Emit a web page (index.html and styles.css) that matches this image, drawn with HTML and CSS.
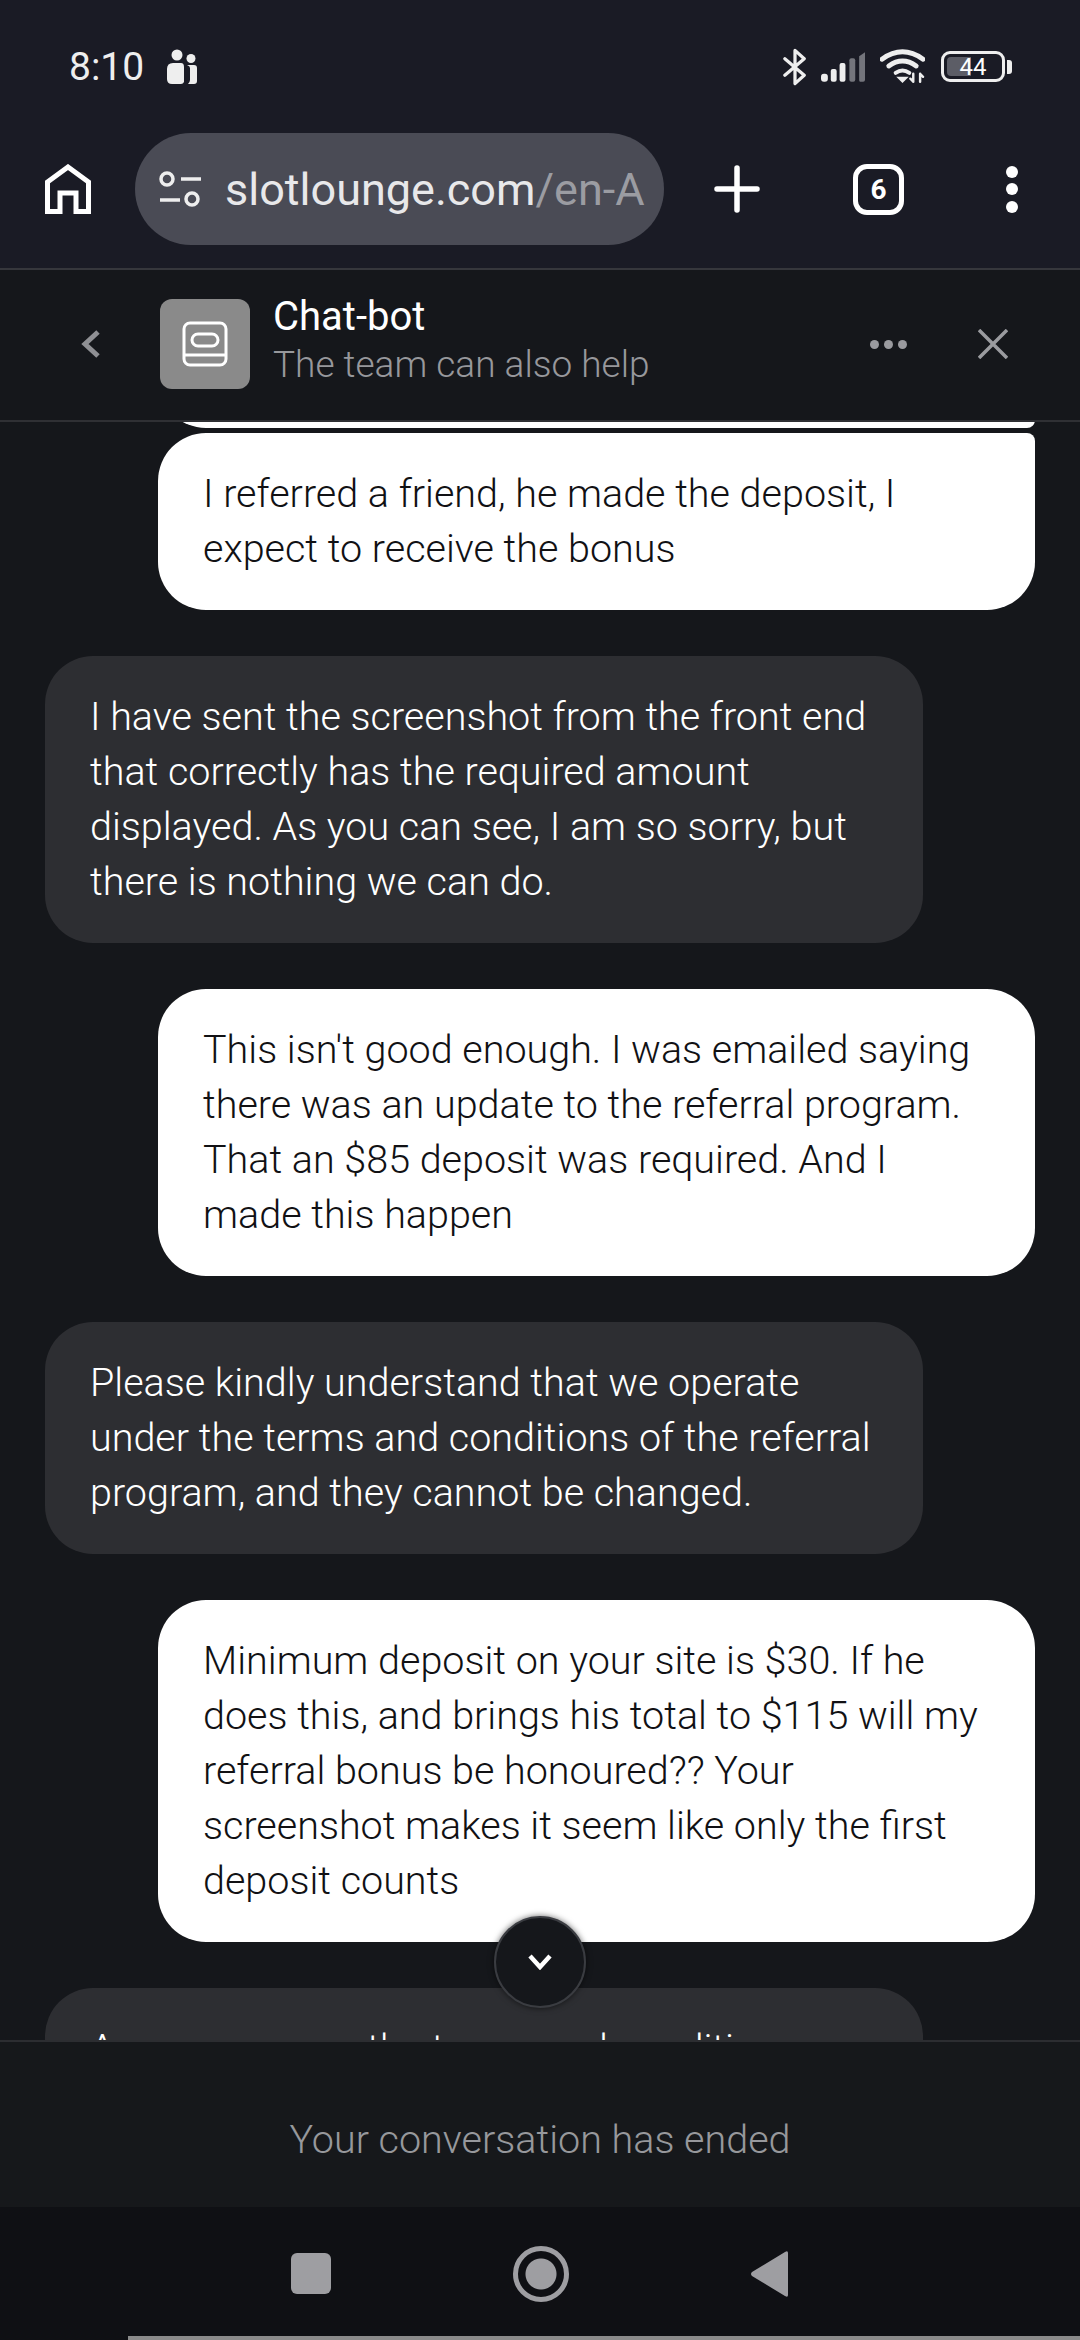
FILE: index.html
```html
<!DOCTYPE html>
<html>
  <head>
    <title>chat</title>
    <link rel="stylesheet" href="styles.css">
  </head>
  <body>
    <div id="phone">
      <div id="top-bar">
        <div id="status-bar">
          <div class="status-left">
            <span id="clock">8:10</span>
            <svg class="people" width="32" height="36" viewBox="0 0 32 36">
              <circle cx="11" cy="6" r="5.500" fill="#eeeeee"/>
              <circle cx="25" cy="9.500" r="4.500" fill="#eeeeee"/>
              <path d="M1 20q0-6 6-6h8q3 0 3 4v15q-1 2-3 2H6q-5 0-5-5z" fill="#eeeeee"/>
              <path d="M21 16h7q3 0 3 3v13q0 3-3 3h-6q2-2 2-4V19q0-2-3-3z" fill="#eeeeee"/>
            </svg>
          </div>
          <div class="status-right">
            <svg width="24" height="40" viewBox="0 0 26 40" fill="none" stroke="#eeeeee" stroke-width="3.500" stroke-linejoin="round" stroke-linecap="round">
              <path d="M2 11l21 18-10 9V2l10 9L2 29"/>
            </svg>
            <svg class="signal" width="45" height="30" viewBox="0 0 46 30">
              <rect x="0" y="22" width="7" height="8" rx="3" fill="#eeeeee"/>
              <rect x="10" y="17" width="6" height="13" rx="2" fill="#eeeeee"/>
              <rect x="19" y="11" width="6" height="19" rx="2" fill="#eeeeee"/>
              <rect x="29" y="6" width="6" height="24" rx="2" fill="#74757c"/>
              <path d="M39 4l6-4v28q0 2-2 2h-3q-1 0-1-2z" fill="#74757c"/>
            </svg>
            <svg class="wifi" width="45" height="35" viewBox="0 0 46 35" fill="none" stroke="#eeeeee" stroke-linecap="round">
              <path d="M2 10Q23-5 44 10" stroke-width="5"/>
              <path d="M9 17q14-10 28 0" stroke-width="5"/>
              <path d="M16 24q7-5 14 0" stroke-width="4"/>
              <path d="M19 29h8l-4 4z" fill="#eeeeee" stroke-width="2"/>
              <path d="M34 25v8M31 30l3 3M41 33v-8M41 25l3 3" stroke-width="2.500"/>
            </svg>
            <div class="battery">
              <div class="battery-box">
                <div class="battery-fill"></div>
                <span class="battery-num">44</span>
              </div>
              <div class="battery-tip"></div>
            </div>
          </div>
        </div>
        <div id="browser-bar">
          <svg class="home-icon" width="46" height="50" viewBox="0 0 46 50" fill="none" stroke="#ffffff" stroke-width="5">
            <path d="M2.500 47.500V18L23 3 43.500 18v29.500H31V29H15v18.500z"/>
          </svg>
          <div id="omnibox">
            <svg width="44" height="36" viewBox="0 0 44 36" fill="none" stroke="#eeeeee" stroke-width="3.500">
              <circle cx="9" cy="8" r="6"/>
              <path d="M23 8h20M2 29h20"/>
              <circle cx="34" cy="28" r="6"/>
            </svg>
            <div class="url"><span class="url-host">slotlounge.com</span><span class="url-path">/en-A</span></div>
          </div>
          <svg class="plus-icon" width="46" height="48" viewBox="0 0 46 48" stroke="#ffffff" stroke-width="5.500" stroke-linecap="round">
            <path d="M23 3v42M3 24h40"/>
          </svg>
          <div class="tabs-count">6</div>
          <div class="dots-v"><i></i><i></i><i></i></div>
        </div>
      </div>

      <div id="chat-header">
        <svg class="back-icon" width="20" height="30" viewBox="0 0 20 30" fill="none" stroke="#8f9094" stroke-width="5">
          <path d="M17 3L4 15l13 12"/>
        </svg>
        <div class="bot-avatar">
          <svg width="46" height="46" viewBox="0 0 46 46" fill="none" stroke="#ffffff" stroke-width="3">
            <rect x="2" y="2" width="42" height="42" rx="6"/>
            <rect x="10" y="13" width="26" height="12" rx="6"/>
            <path d="M2 34h42"/>
          </svg>
        </div>
        <div class="bot-info">
          <div class="bot-name">Chat-bot</div>
          <div class="bot-sub">The team can also help</div>
        </div>
        <div class="dots-h"><i></i><i></i><i></i></div>
        <svg class="close-icon" width="30" height="30" viewBox="0 0 30 30" stroke="#9a9b9f" stroke-width="3.500">
          <path d="M1 1l28 28M29 1L1 29"/>
        </svg>
      </div>

      <div id="content">
        <div class="msg-list">
          <div class="msg user cut-top"></div>
          <div class="msg user first">I referred a friend, he made the deposit, I expect to receive the bonus</div>
          <div class="msg agent">I have sent the screenshot from the front end that correctly has the required amount displayed. As you can see, I am so sorry, but there is nothing we can do.</div>
          <div class="msg user">This isn't good enough. I was emailed saying there was an update to the referral program. That an $85 deposit was required. And I made this happen</div>
          <div class="msg agent">Please kindly understand that we operate under the terms and conditions of the referral program, and they cannot be changed.</div>
          <div class="msg user">Minimum deposit on your site is $30. If he does this, and brings his total to $115 will my referral bonus be honoured?? Your screenshot makes it seem like only the first deposit counts</div>
          <div class="msg agent">As you can see, the terms and conditions</div>
        </div>
        <div class="scroll-down">
          <svg width="26" height="16" viewBox="0 0 26 16" fill="none" stroke="#ffffff" stroke-width="4.500">
            <path d="M3 2l10 11L23 2"/>
          </svg>
        </div>
      </div>

      <div id="ended-box">Your conversation has ended</div>

      <div id="nav-bar">
        <div class="nav-square"></div>
        <div class="nav-circle"></div>
        <svg width="40" height="48" viewBox="0 0 40 48"><path d="M38 3v42q0 3-3 1L2 26q-2-2 0-4L35 2q3-2 3 1z" fill="#9e9ea2"/></svg>
        <div class="nav-line"></div>
      </div>
    </div>
  </body>
</html>
```

FILE: styles.css
```css
html, body {
    padding: 0;
    margin: 0;
    background: #15171b;
}

#phone {
    width: 1080px;
    height: 2340px;
    display: flex;
    flex-direction: column;
    overflow: hidden;
    font-family: Roboto, "Noto Sans", sans-serif;
}

#top-bar {
    height: 268px;
    background: #1a1b25;
    flex-shrink: 0;
}

#status-bar {
    height: 133px;
    padding: 0 68px 0 69px;
    box-sizing: border-box;
    display: flex;
    justify-content: space-between;
    align-items: center;
}

.status-left {
    display: flex;
    align-items: center;
    gap: 22px;
}

#clock {
    color: #eeeeee;
    font-size: 39px;
}

.status-right {
    display: flex;
    align-items: center;
    gap: 14px;
}

.battery {
    display: flex;
    align-items: center;
    gap: 2px;
    margin-left: 2px;
}

.battery-box {
    width: 64px;
    height: 31px;
    border: 3px solid #eeeeee;
    border-radius: 9px;
    padding: 3px;
    box-sizing: border-box;
    position: relative;
}

.battery-fill {
    width: 24px;
    height: 100%;
    background: #5c5d66;
    border-radius: 4px 0 0 4px;
}

.battery-num {
    position: absolute;
    left: 12px;
    top: 0;
    width: 34px;
    text-align: center;
    color: #ffffff;
    font-size: 24px;
    line-height: 26px;
}

.battery-tip {
    width: 5px;
    height: 14px;
    background: #eeeeee;
    border-radius: 0 3px 3px 0;
}

#browser-bar {
    display: flex;
    align-items: center;
    height: 112px;
    padding-left: 45px;
}

.home-icon {
    flex-shrink: 0;
}

#omnibox {
    width: 529px;
    height: 112px;
    margin-left: 44px;
    border-radius: 56px;
    background: #4a4b55;
    display: flex;
    align-items: center;
    padding: 0 12px 0 23px;
    box-sizing: border-box;
    gap: 23px;
    flex-shrink: 0;
}

#omnibox svg {
    flex-shrink: 0;
}

.url {
    font-size: 45px;
    white-space: nowrap;
}

.url-host {
    color: #e8e8ea;
}

.url-path {
    color: #9b9ca2;
}

.plus-icon {
    margin-left: 50px;
    flex-shrink: 0;
}

.tabs-count {
    width: 51px;
    height: 51px;
    box-sizing: border-box;
    margin-left: 93px;
    border: 5px solid #ffffff;
    border-radius: 14px;
    color: #ffffff;
    font-size: 28px;
    font-weight: 700;
    line-height: 41px;
    text-align: center;
    flex-shrink: 0;
}

.dots-v {
    margin-left: 102px;
    display: flex;
    flex-direction: column;
    gap: 5.500px;
}

.dots-v i {
    display: block;
    width: 12px;
    height: 12px;
    border-radius: 50%;
    background: #ffffff;
}

#chat-header {
    height: 154px;
    flex-shrink: 0;
    box-sizing: border-box;
    padding-bottom: 2px;
    background: #15171b;
    border-top: 2px solid #36373c;
    border-bottom: 2px solid #2f3034;
    display: flex;
    align-items: center;
    padding-left: 81px;
    position: relative;
    z-index: 1;
}

.bot-avatar {
    width: 90px;
    height: 90px;
    margin-left: 59px;
    border-radius: 12px;
    background: #8a8a8a;
    display: flex;
    align-items: center;
    justify-content: center;
}

.bot-info {
    margin-left: 23px;
    padding-bottom: 6px;
    flex: 1;
}

.bot-name {
    color: #ffffff;
    font-size: 40px;
    line-height: 48px;
}

.bot-sub {
    color: #97989c;
    font-size: 37px;
    font-weight: 300;
    line-height: 48px;
}

.dots-h {
    display: flex;
    gap: 5px;
    margin-right: 71px;
}

.dots-h i {
    display: block;
    width: 9px;
    height: 9px;
    border-radius: 50%;
    background: #9a9b9f;
}

.close-icon {
    margin-right: 72px;
}

#content {
    flex: 1;
    min-height: 0;
    position: relative;
    overflow: hidden;
    background: #15171b;
}

.msg-list {
    display: flex;
    flex-direction: column;
    gap: 46px;
    padding: 0 45px;
    margin-top: -100px;
}

.msg {
    box-sizing: border-box;
    padding: 33px 45px 34px;
    border-radius: 48px;
    font-size: 39.500px;
    font-weight: 300;
    line-height: 55px;
}

.user {
    width: 877px;
    background: #ffffff;
    color: #111114;
    align-self: flex-end;
}

.agent {
    width: 878px;
    background: #2d2e32;
    color: #ffffff;
}

.cut-top {
    height: 106px;
    border-bottom-right-radius: 8px;
}

.first {
    margin-top: -41px;
    border-top-right-radius: 8px;
}

.scroll-down {
    position: absolute;
    left: 494px;
    top: 1494px;
    width: 92px;
    height: 92px;
    box-sizing: border-box;
    border: 2px solid #3a3c41;
    border-radius: 50%;
    background: #15171b;
    box-shadow: 0 0 6px rgba(0, 0, 0, 0.6);
    display: flex;
    align-items: center;
    justify-content: center;
}

#ended-box {
    height: 167px;
    flex-shrink: 0;
    box-sizing: border-box;
    padding-top: 30px;
    background: #16181b;
    border-top: 2px solid #2c2d31;
    color: #97989c;
    font-size: 39.500px;
    font-weight: 300;
    display: flex;
    align-items: center;
    justify-content: center;
}

#nav-bar {
    height: 133px;
    flex-shrink: 0;
    background: #0f1014;
    display: flex;
    align-items: center;
    justify-content: center;
    position: relative;
}

.nav-square {
    width: 40px;
    height: 41px;
    border-radius: 6px;
    background: #9e9ea2;
    margin-right: 182px;
}

.nav-circle {
    width: 56px;
    height: 56px;
    box-sizing: border-box;
    border: 5px solid #9e9ea2;
    border-radius: 50%;
    background: radial-gradient(circle, #9e9ea2 15px, transparent 16px);
    margin-right: 181px;
}

.nav-line {
    position: absolute;
    left: 128px;
    right: 0;
    bottom: 0;
    height: 4px;
    background: #8a8a8a;
}
```
